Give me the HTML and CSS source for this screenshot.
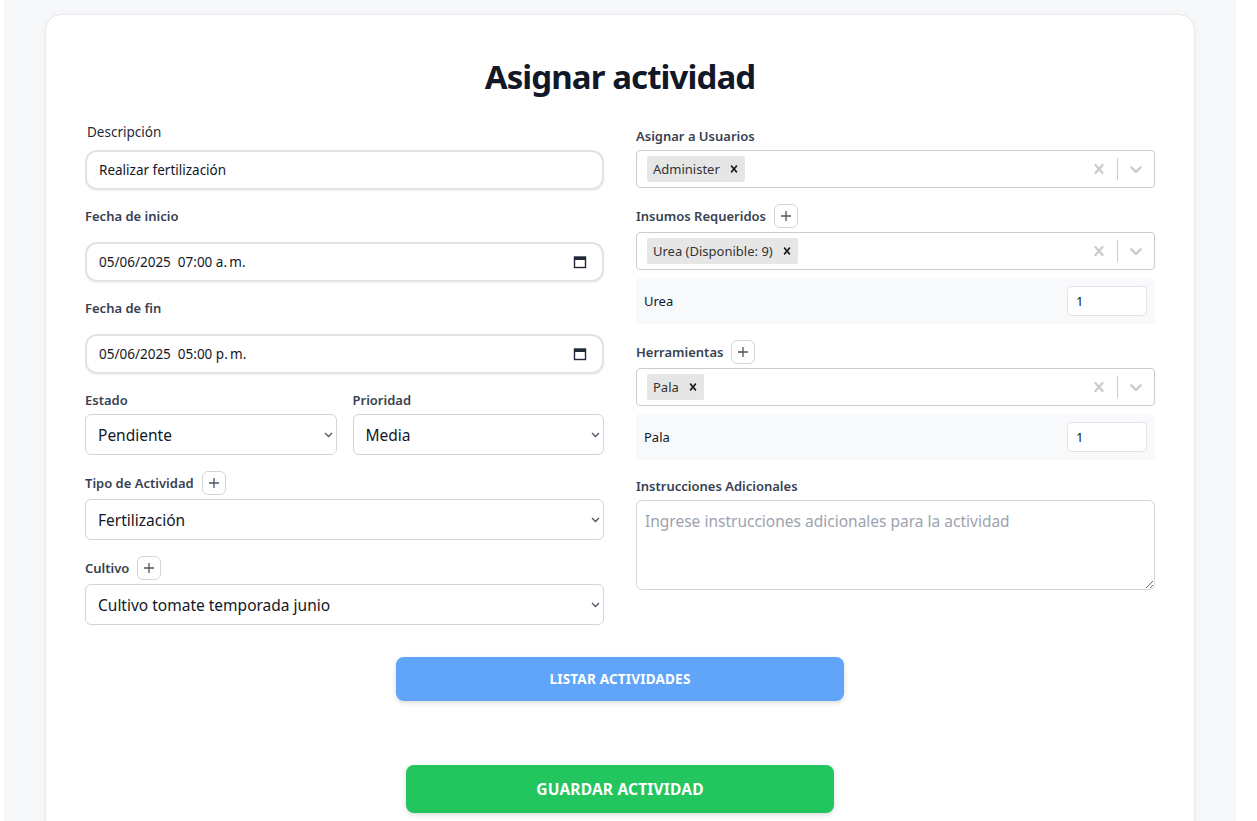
FILE: index.html
```html
<!DOCTYPE html>
<html lang="es">
<head>
<meta charset="utf-8">
<title>Asignar actividad</title>
<link rel="stylesheet" href="styles.css">
</head>
<body>
<div class="page">
  <div class="card">
    <h1 class="title">Asignar actividad</h1>
    <div class="grid">
      <div class="col">
        <div class="field">
          <label class="label-plain">Descripción</label>
          <input class="text-input" type="text" value="Realizar fertilización">
        </div>
        <div class="field">
          <div class="label label-date">Fecha de inicio</div>
          <div class="date-input">
            <span class="date-text">05/06/2025&nbsp; 07:00 a.&#8201;m.</span>
            <svg class="cal" width="14" height="14" viewBox="0 0 14 14"><rect x="1.5" y="2" width="11" height="10.5" fill="none" stroke="#1f2937" stroke-width="1.4"/><rect x="1.5" y="2" width="11" height="3" fill="#1f2937"/></svg>
          </div>
        </div>
        <div class="field">
          <div class="label label-date">Fecha de fin</div>
          <div class="date-input">
            <span class="date-text">05/06/2025&nbsp; 05:00 p.&#8201;m.</span>
            <svg class="cal" width="14" height="14" viewBox="0 0 14 14"><rect x="1.5" y="2" width="11" height="10.5" fill="none" stroke="#1f2937" stroke-width="1.4"/><rect x="1.5" y="2" width="11" height="3" fill="#1f2937"/></svg>
          </div>
        </div>
        <div class="field two">
          <div>
            <div class="label">Estado</div>
            <div class="select-wrap">
              <select class="select"><option>Pendiente</option></select>
              <svg class="chev" width="9" height="6" viewBox="0 0 9 6"><path d="M1 1l3.5 3.5L8 1" fill="none" stroke="#4b5563" stroke-width="1.3"/></svg>
            </div>
          </div>
          <div>
            <div class="label">Prioridad</div>
            <div class="select-wrap">
              <select class="select"><option>Media</option></select>
              <svg class="chev" width="9" height="6" viewBox="0 0 9 6"><path d="M1 1l3.5 3.5L8 1" fill="none" stroke="#4b5563" stroke-width="1.3"/></svg>
            </div>
          </div>
        </div>
        <div class="field">
          <div class="label-row"><span class="label">Tipo de Actividad</span><button class="plus"><svg width="12" height="12" viewBox="0 0 12 12"><path d="M6 1v10M1 6h10" stroke="#4b5563" stroke-width="1.3"/></svg></button></div>
          <div class="select-wrap">
            <select class="select"><option>Fertilización</option></select>
            <svg class="chev" width="9" height="6" viewBox="0 0 9 6"><path d="M1 1l3.5 3.5L8 1" fill="none" stroke="#4b5563" stroke-width="1.3"/></svg>
          </div>
        </div>
        <div class="field last">
          <div class="label-row"><span class="label">Cultivo</span><button class="plus"><svg width="12" height="12" viewBox="0 0 12 12"><path d="M6 1v10M1 6h10" stroke="#4b5563" stroke-width="1.3"/></svg></button></div>
          <div class="select-wrap">
            <select class="select"><option>Cultivo tomate temporada junio</option></select>
            <svg class="chev" width="9" height="6" viewBox="0 0 9 6"><path d="M1 1l3.5 3.5L8 1" fill="none" stroke="#4b5563" stroke-width="1.3"/></svg>
          </div>
        </div>
      </div>

      <div class="col col-right">
        <div class="field">
          <div class="label">Asignar a Usuarios</div>
          <div class="rs">
            <div class="rs-values">
              <span class="chip"><span class="chip-text">Administer</span><span class="chip-x"><svg width="14" height="14" viewBox="0 0 20 20"><path d="M14.348 14.849c-0.469 0.469-1.229 0.469-1.697 0l-2.651-3.030-2.651 3.029c-0.469 0.469-1.229 0.469-1.697 0-0.469-0.469-0.469-1.229 0-1.697l2.758-3.15-2.759-3.152c-0.469-0.469-0.469-1.228 0-1.697s1.228-0.469 1.697 0l2.652 3.031 2.651-3.031c0.469-0.469 1.228-0.469 1.697 0s0.469 1.229 0 1.697l-2.758 3.152 2.758 3.15c0.469 0.469 0.469 1.229 0 1.698z"/></svg></span></span>
            </div>
            <div class="rs-ind">
              <span class="ind"><svg width="20" height="20" viewBox="0 0 20 20"><path d="M14.348 14.849c-0.469 0.469-1.229 0.469-1.697 0l-2.651-3.030-2.651 3.029c-0.469 0.469-1.229 0.469-1.697 0-0.469-0.469-0.469-1.229 0-1.697l2.758-3.15-2.759-3.152c-0.469-0.469-0.469-1.228 0-1.697s1.228-0.469 1.697 0l2.652 3.031 2.651-3.031c0.469-0.469 1.228-0.469 1.697 0s0.469 1.229 0 1.697l-2.758 3.152 2.758 3.15c0.469 0.469 0.469 1.229 0 1.698z"/></svg></span>
              <span class="sep"></span>
              <span class="ind"><svg width="20" height="20" viewBox="0 0 20 20"><path d="M4.516 7.548c0.436-0.446 1.043-0.481 1.576 0l3.908 3.747 3.908-3.747c0.533-0.481 1.141-0.446 1.574 0 0.436 0.445 0.408 1.197 0 1.615-0.406 0.418-4.695 4.502-4.695 4.502-0.217 0.223-0.502 0.335-0.787 0.335s-0.57-0.112-0.789-0.335c0 0-4.287-4.084-4.695-4.502s-0.436-1.17 0-1.615z"/></svg></span>
            </div>
          </div>
        </div>

        <div class="field">
          <div class="label-row"><span class="label">Insumos Requeridos</span><button class="plus"><svg width="12" height="12" viewBox="0 0 12 12"><path d="M6 1v10M1 6h10" stroke="#4b5563" stroke-width="1.3"/></svg></button></div>
          <div class="rs">
            <div class="rs-values">
              <span class="chip"><span class="chip-text">Urea (Disponible: 9)</span><span class="chip-x"><svg width="14" height="14" viewBox="0 0 20 20"><path d="M14.348 14.849c-0.469 0.469-1.229 0.469-1.697 0l-2.651-3.030-2.651 3.029c-0.469 0.469-1.229 0.469-1.697 0-0.469-0.469-0.469-1.229 0-1.697l2.758-3.15-2.759-3.152c-0.469-0.469-0.469-1.228 0-1.697s1.228-0.469 1.697 0l2.652 3.031 2.651-3.031c0.469-0.469 1.228-0.469 1.697 0s0.469 1.229 0 1.697l-2.758 3.152 2.758 3.15c0.469 0.469 0.469 1.229 0 1.698z"/></svg></span></span>
            </div>
            <div class="rs-ind">
              <span class="ind"><svg width="20" height="20" viewBox="0 0 20 20"><path d="M14.348 14.849c-0.469 0.469-1.229 0.469-1.697 0l-2.651-3.030-2.651 3.029c-0.469 0.469-1.229 0.469-1.697 0-0.469-0.469-0.469-1.229 0-1.697l2.758-3.15-2.759-3.152c-0.469-0.469-0.469-1.228 0-1.697s1.228-0.469 1.697 0l2.652 3.031 2.651-3.031c0.469-0.469 1.228-0.469 1.697 0s0.469 1.229 0 1.697l-2.758 3.152 2.758 3.15c0.469 0.469 0.469 1.229 0 1.698z"/></svg></span>
              <span class="sep"></span>
              <span class="ind"><svg width="20" height="20" viewBox="0 0 20 20"><path d="M4.516 7.548c0.436-0.446 1.043-0.481 1.576 0l3.908 3.747 3.908-3.747c0.533-0.481 1.141-0.446 1.574 0 0.436 0.445 0.408 1.197 0 1.615-0.406 0.418-4.695 4.502-4.695 4.502-0.217 0.223-0.502 0.335-0.787 0.335s-0.57-0.112-0.789-0.335c0 0-4.287-4.084-4.695-4.502s-0.436-1.170 0-1.615z"/></svg></span>
            </div>
          </div>
          <div class="qty-panel">
            <span class="qty-name">Urea</span>
            <input class="qty" type="number" value="1">
          </div>
        </div>

        <div class="field">
          <div class="label-row"><span class="label">Herramientas</span><button class="plus"><svg width="12" height="12" viewBox="0 0 12 12"><path d="M6 1v10M1 6h10" stroke="#4b5563" stroke-width="1.3"/></svg></button></div>
          <div class="rs">
            <div class="rs-values">
              <span class="chip"><span class="chip-text">Pala</span><span class="chip-x"><svg width="14" height="14" viewBox="0 0 20 20"><path d="M14.348 14.849c-0.469 0.469-1.229 0.469-1.697 0l-2.651-3.030-2.651 3.029c-0.469 0.469-1.229 0.469-1.697 0-0.469-0.469-0.469-1.229 0-1.697l2.758-3.15-2.759-3.152c-0.469-0.469-0.469-1.228 0-1.697s1.228-0.469 1.697 0l2.652 3.031 2.651-3.031c0.469-0.469 1.228-0.469 1.697 0s0.469 1.229 0 1.697l-2.758 3.152 2.758 3.150c0.469 0.469 0.469 1.229 0 1.698z"/></svg></span></span>
            </div>
            <div class="rs-ind">
              <span class="ind"><svg width="20" height="20" viewBox="0 0 20 20"><path d="M14.348 14.849c-0.469 0.469-1.229 0.469-1.697 0l-2.651-3.030-2.651 3.029c-0.469 0.469-1.229 0.469-1.697 0-0.469-0.469-0.469-1.229 0-1.697l2.758-3.15-2.759-3.152c-0.469-0.469-0.469-1.228 0-1.697s1.228-0.469 1.697 0l2.652 3.031 2.651-3.031c0.469-0.469 1.228-0.469 1.697 0s0.469 1.229 0 1.697l-2.758 3.152 2.758 3.15c0.469 0.469 0.469 1.229 0 1.698z"/></svg></span>
              <span class="sep"></span>
              <span class="ind"><svg width="20" height="20" viewBox="0 0 20 20"><path d="M4.516 7.548c0.436-0.446 1.043-0.481 1.576 0l3.908 3.747 3.908-3.747c0.533-0.481 1.141-0.446 1.574 0 0.436 0.445 0.408 1.197 0 1.615-0.406 0.418-4.695 4.502-4.695 4.502-0.217 0.223-0.502 0.335-0.787 0.335s-0.57-0.112-0.789-0.335c0 0-4.287-4.084-4.695-4.502s-0.436-1.17 0-1.615z"/></svg></span>
            </div>
          </div>
          <div class="qty-panel">
            <span class="qty-name">Pala</span>
            <input class="qty" type="number" value="1">
          </div>
        </div>

        <div class="field last">
          <div class="label">Instrucciones Adicionales</div>
          <textarea class="textarea" placeholder="Ingrese instrucciones adicionales para la actividad"></textarea>
        </div>
      </div>
    </div>

    <div class="actions">
      <button class="btn btn-list">LISTAR ACTIVIDADES</button>
      <button class="btn btn-save">GUARDAR ACTIVIDAD</button>
    </div>
  </div>
</div>
</body>
</html>
```
FILE: styles.css
```css
* { box-sizing: border-box; }
html, body { margin: 0; padding: 0; background: #ffffff; }
body {
  font-family: "Noto Sans", "Open Sans", sans-serif;
  color: #1f2937;
  overflow: hidden;
}
.page {
  margin-left: 4px;
  width: 1232px;
  min-height: 821px;
  background: #f7f8fa;
  padding-top: 14px;
}
.card {
  margin-left: 41px;
  width: 1150px;
  min-height: 900px;
  background: #ffffff;
  border: 1px solid #e8e9ec;
  border-radius: 16px;
  box-shadow: 0 2px 10px rgba(0,0,0,0.05);
  padding: 39px 39px 40px;
}
.title {
  margin: 0 0 22px;
  text-align: center;
  font-size: 33px;
  line-height: 46px;
  font-weight: 700;
  color: #111827;
  letter-spacing: -0.9px;
}
.grid {
  display: grid;
  grid-template-columns: 519px 519px;
  column-gap: 32px;
  align-items: start;
}
.col { display: flex; flex-direction: column; }
.col-right { padding-top: 4px; }
.field { margin-bottom: 16px; }
.field.last { margin-bottom: 0; }
.two { display: grid; grid-template-columns: 1fr 1fr; column-gap: 16px; }
.label-plain {
  display: block;
  font-size: 13.5px;
  line-height: 21px;
  color: #1f2937;
  margin: 0 0 7px 2px;
}
.label {
  display: block;
  font-size: 13px;
  line-height: 20px;
  font-weight: 600;
  color: #374151;
  margin-bottom: 4px;
}
.label-date { margin-bottom: 16px; }
.label-row {
  display: flex;
  align-items: center;
  gap: 8px;
  height: 24px;
  margin-bottom: 4px;
}
.label-row .label { margin-bottom: 0; }
.plus {
  width: 24px;
  height: 24px;
  padding: 0;
  border: 1px solid #d1d5db;
  border-radius: 6px;
  background: #ffffff;
  display: flex;
  align-items: center;
  justify-content: center;
}
.text-input {
  display: block;
  width: 100%;
  height: 40px;
  border: 2px solid #e3e3e3;
  border-radius: 12px;
  padding: 0 12px;
  font-family: inherit;
  font-size: 13.5px;
  color: #111827;
  background: #fff;
  box-shadow: 0 1px 2px rgba(0,0,0,0.06);
  outline: none;
}
.date-input {
  display: flex;
  align-items: center;
  justify-content: space-between;
  width: 100%;
  height: 40px;
  border: 2px solid #e3e3e3;
  border-radius: 12px;
  padding: 0 15px 0 12px;
  background: #fff;
  box-shadow: 0 1px 2px rgba(0,0,0,0.06);
}
.date-text { font-size: 13.5px; color: #111827; }
.select-wrap { position: relative; }
.select {
  display: block;
  width: 100%;
  height: 41px;
  appearance: none;
  -webkit-appearance: none;
  border: 1px solid #d1d5db;
  border-radius: 6px;
  background: #fff;
  padding: 0 12px;
  font-family: inherit;
  font-size: 15.5px;
  color: #111827;
  outline: none;
}
.chev {
  position: absolute;
  right: 4px;
  top: 18px;
  pointer-events: none;
}
.rs {
  display: flex;
  align-items: center;
  height: 38px;
  border: 1px solid #cccccc;
  border-radius: 4px;
  background: #fff;
}
.rs-values {
  flex: 1;
  display: flex;
  align-items: center;
  padding: 2px 8px;
}
.chip {
  display: flex;
  align-items: center;
  height: 26px;
  margin: 2px;
  background: #e6e6e6;
  border-radius: 2px;
}
.chip-text {
  font-size: 13px;
  color: #333333;
  padding: 0 3px 0 6px;
}
.chip-x {
  display: flex;
  align-items: center;
  padding: 0 4px;
  fill: #1a1a1a;
}
.rs-ind { display: flex; align-items: center; height: 100%; }
.ind {
  display: flex;
  padding: 8px;
  fill: #cccccc;
}
.sep {
  width: 1px;
  height: 22px;
  background: #cccccc;
}
.qty-panel {
  display: flex;
  align-items: center;
  justify-content: space-between;
  margin-top: 8px;
  height: 46px;
  padding: 0 8px;
  background: #f8f9fb;
  border-radius: 4px;
}
.qty-name { font-size: 13px; color: #111827; }
.qty {
  width: 80px;
  height: 30px;
  border: 1px solid #e2e4e8;
  border-radius: 4px;
  padding: 0 8px;
  font-family: inherit;
  font-size: 13px;
  color: #111827;
  background: #fff;
  -moz-appearance: textfield;
}
.qty::-webkit-inner-spin-button, .qty::-webkit-outer-spin-button { -webkit-appearance: none; margin: 0; }
.textarea {
  display: block;
  width: 100%;
  height: 90px;
  border: 1px solid #d1d5db;
  border-radius: 6px;
  padding: 8px;
  font-family: inherit;
  font-size: 15.5px;
  line-height: 24px;
  color: #111827;
  resize: vertical;
  outline: none;
}
.textarea::placeholder { color: #9ca3af; }
.actions {
  display: flex;
  flex-direction: column;
  align-items: center;
  margin-top: 32px;
  gap: 64px;
}
.btn {
  border: none;
  color: #ffffff;
  font-family: inherit;
  font-weight: 700;
  border-radius: 8px;
  box-shadow: 0 2px 5px rgba(0,0,0,0.15);
  letter-spacing: 0.2px;
}
.btn-list {
  width: 448px;
  height: 44px;
  background: #60a5fa;
  font-size: 13.5px;
}
.btn-save {
  width: 428px;
  height: 48px;
  background: #22c55e;
  font-size: 15.5px;
}
```
